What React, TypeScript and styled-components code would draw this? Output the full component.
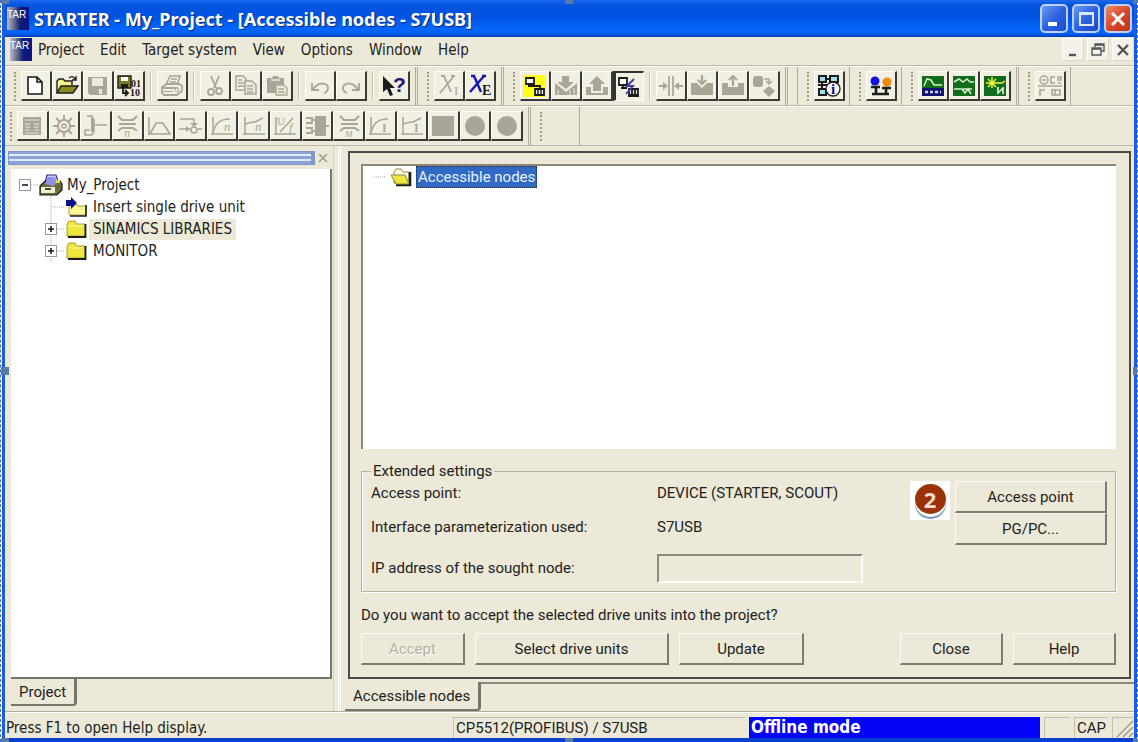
import React from "react";
import styled, { createGlobalStyle, css } from "styled-components";

const face = "#ece9d8";
const ui = '"DejaVu Sans Condensed", "DejaVu Sans", sans-serif';
const dialogFont = 'Roboto, "Liberation Sans", Arial, sans-serif';

const GlobalStyle = createGlobalStyle`
  * { box-sizing: border-box; }
  body { margin: 0; background: #fff; color: #222; font: 15px/20px ${ui}; }
  button, input { font: inherit; color: inherit; padding: 0; margin: 0; border-radius: 0; }
`;

/* ---------- window frame ---------- */

const Shell = styled.div`
  position: relative;
  min-height: 100vh;
  display: flex;
  padding-left: 1px;
  border: 1px dashed #3f6fce;
  border-width: 0 1px;
`;

const Handle = styled.i<{ $x: string; $y: string }>`
  position: absolute;
  width: 8px;
  height: 8px;
  background: #5a7ba6;
  transform: translate(-50%, -50%);
  left: ${(p) => p.$x};
  top: ${(p) => p.$y};
`;

const Handles = styled.div`
  position: absolute;
  inset: 0;
  overflow: hidden;
  pointer-events: none;
`;

const Window = styled.div`
  flex: 1;
  min-width: 0;
  display: flex;
  flex-direction: column;
  background: ${face};
  border: solid #1c5ddb;
  border-width: 0 3px 4px;
  border-bottom-color: #0a3fd0;
`;

const TitleBar = styled.header`
  height: 37px;
  flex: none;
  display: flex;
  align-items: center;
  gap: 5px;
  padding: 0 2px;
  background: linear-gradient(#1a6cf0 0, #0653de 5px, #0054e3 18px, #0566fb 28px, #0563f7 33px, #0340b8 37px);
`;

const Title = styled.h1`
  flex: 1;
  margin: 0;
  color: #fff;
  font: bold 18px/24px "Noto Sans", sans-serif;
  text-shadow: 1px 1px 1px #0a2a80;
  white-space: nowrap;
`;

const Controls = styled.div`
  display: flex;
  gap: 4px;
`;

const ControlButton = styled.button<{ $close?: boolean }>`
  width: 28px;
  height: 29px;
  display: grid;
  place-items: center;
  border: 2px solid #bcd2fa;
  border-radius: 5px;
  background: ${(p) =>
    p.$close
      ? "linear-gradient(135deg, #ef8a6c, #d9472a 50%, #b93216)"
      : "linear-gradient(135deg, #6c9bf5, #2c62e0 50%, #1c4bcd)"};
`;

const MenuBar = styled.nav`
  height: 29px;
  flex: none;
  display: flex;
  align-items: center;
  padding: 0 0 3px 5px;
  border-bottom: 1px solid #bdb9a8;
`;

const MenuItem = styled.button`
  border: 0;
  background: none;
  margin-left: 6px;
  margin-right: 10px;
  line-height: 24px;
  white-space: nowrap;
`;

const MdiControls = styled.div`
  display: flex;
  gap: 3px;
  margin-left: auto;
`;

const MdiButton = styled.button`
  width: 22px;
  height: 23px;
  display: grid;
  place-items: center;
  border: 1px solid #fff;
  border-right-color: #dcd8c8;
  border-bottom-color: #dcd8c8;
  background: #f4f2e8;
`;

/* ---------- toolbars ---------- */

const ToolRow = styled.div`
  height: 40px;
  flex: none;
  display: flex;
  overflow: hidden;
  border-top: 1px solid #fbfaf3;
  border-bottom: 1px solid #bdb9a8;
`;

const ToolGroup = styled.div<{ $double?: boolean; $apart?: boolean }>`
  display: flex;
  align-items: center;
  flex: none;
  border-right: ${(p) => (p.$double ? "3px double #b0ac9a" : "1px solid #b0ac9a")};
  padding-right: ${(p) => (p.$double ? "5px" : "4px")};
  ${(p) => p.$apart && css`
    margin-left: 9px;
    border-left: 1px solid #b0ac9a;
  `}
`;

const Grip = styled.span<{ $near?: boolean }>`
  width: 4px;
  height: 29px;
  margin: 0 5px 0 ${(p) => (p.$near ? "3px" : "7px")};
  border: 1px dotted #a09c8a;
  border-width: 0 2px 0 0;
`;

const Divider = styled.span`
  width: 2px;
  height: 28px;
  margin: 0 5px;
  background: #c4c0ae;
  border-right: 1px solid #fff;
`;

const EmptySlot = styled.span`
  width: 28px;
`;

const Tool = styled.button<{ $pressed?: boolean }>`
  width: 31px;
  height: 30px;
  display: grid;
  place-items: center;
  background: #f2efe3;
  border: solid;
  border-width: ${(p) => (p.$pressed ? "2px 1px 1px 3px" : "1px 2px 2px 1px")};
  border-color: ${(p) => (p.$pressed ? "#333 #fff #fff #333" : "#fffef8 #3a3a36 #3a3a36 #fffef8")};
`;

const DriveTools = styled.div`
  display: grid;
  grid-template-columns: repeat(16, 1fr);
  width: 506px;
  ${Tool} { width: auto; }
`;

/* ---------- work area ---------- */

const Work = styled.div`
  flex: 1;
  display: flex;
  min-height: 0;
  border-bottom: 1px solid #b0ac9a;
`;

const ProjectPane = styled.aside`
  width: 329px;
  flex: none;
  display: flex;
  flex-direction: column;
  padding: 5px 0 5px 3px;
  border-right: 1px solid #d4d0c0;
`;

const PaneCaption = styled.div`
  display: flex;
  align-items: center;
  gap: 3px;
  padding-right: 5px;
`;

const PaneGrip = styled.span`
  flex: 1;
  height: 14px;
  border: 1px solid #8496c8;
  border-right-width: 4px;
  background: linear-gradient(#8ba3d6 0 2px, #e4edfb 2px 4px, #8ba3d6 4px 7px, #dfe9fa 7px 9px, #8ba3d6 9px);
`;

const PaneClose = styled.button`
  width: 10px;
  height: 14px;
  border: 0;
  background: none;
  display: grid;
  place-items: center;
`;

const Tree = styled.ul`
  flex: 1;
  list-style: none;
  margin: 4px 1px 0 3px;
  padding: 5px 0 0 8px;
  background: #fff;
  border: solid #77746a;
  border-width: 0 2px 2px 0;
`;

const TreeRow = styled.li<{ $child?: boolean }>`
  display: flex;
  align-items: center;
  height: 22px;
  padding-left: ${(p) => (p.$child ? "26px" : "0")};
  white-space: nowrap;
`;

const TreeLabel = styled.span<{ $marked?: boolean }>`
  padding: 0 4px;
  line-height: 21px;
  background: ${(p) => (p.$marked ? "#ece9d8" : "none")};
`;

const Splitter = styled.div`
  width: 7px;
  flex: none;
  border-left: 3px double #fff;
  margin-left: 4px;
`;

const TabButton = styled.button`
  align-self: flex-start;
  border: solid #77746a;
  border-width: 0 3px 2px 0;
  border-bottom-right-radius: 4px;
  background: ${face};
  height: 29px;
  padding: 0 8px;
  font-family: ${dialogFont};
  white-space: nowrap;
`;

const ProjectTab = styled(TabButton)`
  height: 27px;
  margin-left: 3px;
`;

const Document = styled.main`
  flex: 1;
  min-width: 0;
  display: flex;
  flex-direction: column;
  padding-top: 5px;
  font-family: ${dialogFont};
`;

const DocFrame = styled.section`
  flex: 1;
  display: flex;
  flex-direction: column;
  margin-right: 3px;
  margin-left: 3px;
  padding: 11px 13px 12px 11px;
  border: 2px solid #4c4a48;
`;

const DocFooter = styled.div`
  display: flex;
  margin-top: 3px;
  > span { flex: 1; border-top: 2px solid #8b887c; }
`;

const NodeList = styled.ul`
  flex: 1;
  min-height: 120px;
  list-style: none;
  margin: 0;
  padding: 0 0 0 11px;
  background: #fff;
  border: solid #8b887c;
  border-width: 2px 0 0 2px;
`;

const NodeRow = styled.li`
  display: flex;
  align-items: center;
  gap: 4px;
  height: 22px;
`;

const SelectedLabel = styled.span`
  padding: 0 1px;
  line-height: 20px;
  color: #e8f2ff;
  background: #316ac5;
  border: 1px dotted #1b2c50;
`;

const Settings = styled.fieldset`
  min-width: 0;
  margin: 12px 0 0;
  padding: 0 8px 4px 9px;
  border: 1px solid #b5b1a0;
  box-shadow: inset 1px 0 #fff, 1px 1px #fff;
`;

const Legend = styled.legend`
  padding: 0 2px;
  line-height: 20px;
`;

const SettingsBody = styled.div`
  display: flex;
  align-items: flex-start;
`;

const Fields = styled.div`
  flex: 1;
  display: grid;
  grid-template-columns: 286px 1fr;
  grid-template-rows: 24px 44px 38px;
  align-items: center;
  white-space: nowrap;
`;

const AddressInput = styled.input`
  width: 206px;
  height: 29px;
  background: ${face};
  border: 2px solid;
  border-color: #8b887c #fbfaf3 #fbfaf3 #8b887c;
`;

const Step = styled.span`
  flex: none;
  width: 40px;
  height: 39px;
  margin-right: 5px;
  padding-top: 3px;
  display: flex;
  justify-content: center;
  background: #fff;
`;

const StepNumber = styled.b`
  width: 31px;
  height: 30px;
  border-radius: 50%;
  background: #9c3208;
  box-shadow: 0 3px 0 #fff, 0 5px 1px #7590ad;
  color: #f4dccb;
  font: bold 22px/30px "Noto Sans", sans-serif;
  text-align: center;
`;

const Actions = styled.div`
  width: 152px;
  display: flex;
  flex-direction: column;
`;

const PushButton = styled.button<{ $w?: number }>`
  width: ${(p) => (p.$w ? `${p.$w}px` : "auto")};
  height: 32px;
  flex: none;
  background: ${face};
  border: solid;
  border-width: 1px 2px 2px 1px;
  border-color: #fbfaf3 #7d7a6e #7d7a6e #fbfaf3;
  white-space: nowrap;
  &:disabled { color: #b3af9e; text-shadow: 1px 1px #fff; }
`;

const Question = styled.p`
  margin: 13px 0 8px;
  line-height: 20px;
`;

const ButtonRow = styled.div`
  display: flex;
  gap: 10px;
`;

const Spacer = styled.span`
  flex: 1;
`;

/* ---------- status bar ---------- */

const StatusBar = styled.footer`
  height: 26px;
  flex: none;
  display: flex;
  align-items: center;
  gap: 4px;
  padding-top: 4px;
  border-top: 1px solid #fff;
  line-height: 20px;
  white-space: nowrap;
`;

const StatusCell = styled.span<{ $w: number; $mode?: boolean }>`
  flex: none;
  width: ${(p) => p.$w}px;
  height: 21px;
  padding-left: 2px;
  border: solid #c4c0ae;
  border-width: 1px 0 0 1px;
  font: 15px/20px ${dialogFont};
  ${(p) => p.$mode && css`
    background: #0404f6;
    border: 0;
    color: #fff;
    font: bold 17px/21px ${ui};
  `}
`;

const StatusHint = styled.span`
  flex: 1;
  padding-left: 1px;
`;

/* ---------- drawings ---------- */

const Drawing = styled.svg`
  overflow: visible;
  flex: none;
`;

type Draw = { children?: React.ReactNode; w?: number; h?: number };
const Svg = ({ children, w = 24, h = 22 }: Draw) => (
  <Drawing width={w} height={h} viewBox={`0 0 ${w} ${h}`} fill="none" aria-hidden="true">
    {children}
  </Drawing>
);

const G = "#aaa697";
const K = "#1c1c1c";

const Letter = (p: { x: number; y: number; s: number; c: string; t: string; i?: boolean; b?: boolean }) => (
  <text x={p.x} y={p.y} fontSize={p.s} fill={p.c} fontFamily="Liberation Serif, serif"
    fontStyle={p.i ? "italic" : "normal"} fontWeight={p.b ? "bold" : "normal"}>{p.t}</text>
);

const AppLogo = () => (
  <Drawing width="22" height="23" viewBox="0 0 22 23" aria-hidden="true">
    <defs>
      <linearGradient id="logo" x1="0" x2="1">
        <stop offset="0" stopColor="#b9bdd0" />
        <stop offset=".35" stopColor="#5c6488" />
        <stop offset=".6" stopColor="#101c78" />
        <stop offset="1" stopColor="#0a1488" />
      </linearGradient>
    </defs>
    <rect width="22" height="23" fill="url(#logo)" />
    <text x="0" y="11" fontSize="10" fill="#fff" fontFamily="Liberation Sans, sans-serif">TAR</text>
  </Drawing>
);

const axes = <path d="M3 2v17M1 19h22" stroke={G} strokeWidth="1.5" />;
const funnel = <path d="M3 1l4 4h11l4-4M4 9h17M3 16l4-3h11l4 3" stroke={G} strokeWidth="2" />;

const icons: Record<string, React.ReactNode> = {
  fresh: <path d="M4 2h9l5 5v12H4zM13 2v5h5" fill="#fff" stroke={K} strokeWidth="1.6" />,
  open: (
    <>
      <path d="M2 18V6l2-2h4l2 2h7v4" fill="#f4f08a" stroke={K} strokeWidth="1.4" />
      <path d="M2 18l4-7h17l-5 7z" fill="#8d8a1d" stroke={K} strokeWidth="1.4" />
      <path d="M14 3c2-2 4-2 6 1m1-3v4h-4" stroke={K} strokeWidth="1.4" />
    </>
  ),
  save: (
    <>
      <path d="M2 2h19v18H4l-2-2z" fill={G} />
      <path d="M6 3h11v8H6zM13 14h3v5h-3z" fill={face} />
    </>
  ),
  saveCompile: (
    <>
      <path d="M1 1h13v12H1z" fill="#7d7b22" stroke={K} strokeWidth="1.4" />
      <path d="M4 2h7v4H4z" fill="#fff" />
      <path d="M4 9h7v4H4z" fill={K} />
      <path d="M6 13v5h4m-2-3l3 3-3 3" stroke={K} strokeWidth="1.8" />
      <Letter x={14} y={12} s={10} c={K} t="01" b />
      <Letter x={13} y={21} s={10} c={K} t="10" b />
    </>
  ),
  print: (
    <>
      <path d="M6 10l4-9h10l-3 9M11 4h6M10 7h6" stroke={G} strokeWidth="1.6" />
      <path d="M2 12l5-3h12l3 2v5l-5 4H4l-2-2z" stroke={G} strokeWidth="1.8" />
      <path d="M3 12h15v2H3zM3 16h10v1H3z" fill={G} />
      <circle cx="17" cy="15" r="2" fill={face} stroke={G} />
    </>
  ),
  cut: (
    <>
      <path d="M8 1l5 12M16 1l-5 12" stroke={G} strokeWidth="1.8" />
      <circle cx="8" cy="17" r="3" stroke={G} strokeWidth="1.8" />
      <circle cx="16" cy="16" r="3" stroke={G} strokeWidth="1.8" />
    </>
  ),
  copy: (
    <>
      <path d="M2 1h7l3 3v11H2zM4 5h4M4 8h6M4 11h6" stroke={G} strokeWidth="1.5" />
      <path d="M11 6h7l4 4v9H11zM13 11h6M13 14h6M13 17h6" fill={face} stroke={G} strokeWidth="1.5" />
    </>
  ),
  paste: (
    <>
      <path d="M2 3h5l1-2h5l1 2h5v15H2z" fill={G} />
      <path d="M6 5h9" stroke={face} strokeWidth="1.5" />
      <path d="M11 10h8l3 3v7H11zM13 14h6M13 17h7" fill={face} stroke={G} strokeWidth="1.3" />
    </>
  ),
  undo: <path d="M4 8v7h7M4 15L8 11c4-4 12-3 12 2 0 2-1 4-4 5" stroke={G} strokeWidth="1.8" />,
  redo: <path d="M20 8v7h-7M20 15l-4-4c-4-4-12-3-12 2 0 2 1 4 4 5" stroke={G} strokeWidth="1.8" />,
  help: (
    <>
      <path d="M1 1v16l4-3 3 7 3-1-3-7h5z" fill={K} />
      <text x="11" y="17" fontSize="21" fontWeight="bold" fill="#1d1a70" fontFamily="Liberation Sans, sans-serif">?</text>
    </>
  ),
  xi: <><path d="M3 18L17 1M7 1l7 16M4 1h4M14 1h4" stroke={G} strokeWidth="1.8" /><Letter x={17} y={20} s={13} c={G} t="I" /></>,
  xe: <><path d="M2 17L16 1M6 1l7 16M3 1h4M14 1h4" stroke="#1414b8" strokeWidth="2.4" /><Letter x={14} y={20} s={14} c={K} t="E" b /></>,
  connect: (
    <>
      <path d="M0 0h23v22H0z" fill="#ffff1a" />
      <path d="M3 3h8v6H3zM5 11h5M7 9v2" fill="#fff" stroke={K} strokeWidth="1.8" />
      <path d="M9 11h8v3" stroke={K} strokeWidth="2" />
      <path d="M12 14h9v6h-9z" fill="#eee" stroke={K} strokeWidth="1.8" />
      <path d="M15 14v6M18 14v6" stroke={K} strokeWidth="1.4" />
    </>
  ),
  download: (
    <>
      <path d="M8 1h7v6h5l-8 7-9-7h5z" fill={G} />
      <path d="M1 8l11 9 11-9v12H1z" fill={G} />
      <path d="M4 15v5M16 15v5M20 13v7" stroke={face} />
    </>
  ),
  upload: (
    <>
      <path d="M12 1l8 8h-4v7H8V9H4z" fill={G} />
      <path d="M1 12h5v6h12v-6h5v8H1z" fill={G} />
    </>
  ),
  disconnect: (
    <>
      <path d="M1 2h8v7H1zM3 12h6M5 9v3" fill="#fff" stroke={K} strokeWidth="1.8" />
      <path d="M11 13h9v6h-9zM14 13v6M17 13v6M10 20h11" fill="#ddd" stroke={K} strokeWidth="1.8" />
      <path d="M16 3l-7 7h6l-7 8" stroke="#3a3aa8" strokeWidth="1.8" />
    </>
  ),
  split: (
    <>
      <path d="M10 1v20M14 1v20M0 11h8M24 11h-8" stroke={G} strokeWidth="1.8" />
      <path d="M4 7l5 4-5 4zM20 7l-5 4 5 4z" fill={G} />
    </>
  ),
  chipIn: <><path d="M1 8h6l5 5 5-5h6v12H1z" fill={G} /><path d="M12 0v8M8 5l4 4 4-4" stroke={G} strokeWidth="2.2" /></>,
  chipOut: <><path d="M1 8h6v4h10V8h6v12H1z" fill={G} /><path d="M12 11V2M8 5l4-4 4 4" stroke={G} strokeWidth="2.2" /></>,
  convert: (
    <>
      <rect x="1" y="1" width="10" height="11" rx="3" fill={G} />
      <path d="M17 11l6 5-6 6-6-6z" fill={G} />
      <path d="M12 4h5v4m-3-2l3 3 3-3" stroke={G} strokeWidth="1.5" />
    </>
  ),
  nodesInfo: (
    <>
      <path d="M2 1h7v6H2zM13 1h8v6h-8zM2 14h7v6H2zM5 7v7M1 10h9M9 4h4" fill="#9ee0e8" stroke={K} strokeWidth="2" />
      <circle cx="16" cy="14" r="7" fill="#fff" stroke={K} strokeWidth="1.3" />
      <Letter x={14} y={19} s={15} c="#1010a0" t="i" b />
    </>
  ),
  users: (
    <>
      <circle cx="6" cy="6" r="4.500" fill="#1414e0" />
      <circle cx="18" cy="7" r="4.500" fill="#f08a10" />
      <path d="M2 12h9M13 13h9M7 12v7M17 13v6M3 19h17" stroke={K} strokeWidth="2.6" />
    </>
  ),
  trace: (
    <>
      <path d="M1 1h22v12H1z" fill="#116d1c" /><path d="M1 13h22v8H1z" fill="#12146e" />
      <path d="M3 11l3-7 4 1 3 5h8" stroke="#d9f2d0" strokeWidth="1.500" />
      <path d="M4 17h16" stroke="#cfd4ff" strokeWidth="2.600" strokeDasharray="3 2" />
    </>
  ),
  generator: (
    <>
      <path d="M1 1h22v20H1z" fill="#116d1c" />
      <path d="M2 7l5-3 4 3 4-3 3 3h4M2 14h8l3 4 3-4 3 5M11 14h9" stroke="#d9f2d0" strokeWidth="1.500" />
    </>
  ),
  tune: (
    <>
      <path d="M1 1h22v20H1z" fill="#116d1c" />
      <path d="M9 2v11M3 8h11M5 4l8 8M13 4l-8 8" stroke="#ecf23a" strokeWidth="1.500" />
      <path d="M14 8h5l3-2" stroke="#ecf23a" strokeWidth="1.500" />
      <path d="M15 19v-7M15 18l5-5M20 12v7" stroke="#d9f2d0" strokeWidth="1.700" />
    </>
  ),
  panel: (
    <>
      <circle cx="6" cy="5" r="4" stroke={G} strokeWidth="1.500" />
      <path d="M4 5h4M17 2h-4v6h4M20 2h3v3h-3zM20 8h3M0 11h24M2 21v-6h5M14 15h8v5h-8zM17 14v7" stroke={G} strokeWidth="1.600" />
    </>
  ),
  /* drive commissioning row */
  sheet: (
    <>
      <path d="M3 2h18v18H3z" fill={G} />
      <path d="M5 5h14M5 9h5M14 9h5M5 12h5M14 12h5M5 15h5M14 15h5M5 18h14" stroke={face} strokeWidth="1" />
    </>
  ),
  gear: (
    <>
      <circle cx="12" cy="11" r="6" stroke={G} strokeWidth="2" />
      <circle cx="12" cy="11" r="2" stroke={G} strokeWidth="1.500" />
      <path d="M12 0v5M12 17v5M1 11h5M18 11h5M4 3l4 4M16 15l4 4M20 3l-4 4M8 15l-4 4" stroke={G} strokeWidth="2" />
    </>
  ),
  inputs: (
    <>
      <path d="M3 1h5v13M10 4v12l-2 4H1v-5h5M11 10h12" stroke={G} strokeWidth="1.600" />
      <path d="M7 3h3v14H7z" fill={G} />
    </>
  ),
  limitN: <>{funnel}<Letter x={9} y={22} s={12} c={G} t="n" i /></>,
  ramp: <path d="M2 2v18M1 19h23M3 19l6-11h7l7 11" stroke={G} strokeWidth="1.600" />,
  mixer: (
    <>
      <path d="M2 4h14v6M1 14h11M20 14h4" stroke={G} strokeWidth="1.600" />
      <path d="M12 8h8l-4 4zM8 11l4 3-4 3z" fill={G} />
      <circle cx="16" cy="15" r="3" stroke={G} strokeWidth="1.600" />
    </>
  ),
  curveN: <>{axes}<path d="M3 18C5 9 9 4 20 4" stroke={G} strokeWidth="1.400" /><Letter x={14} y={16} s={13} c={G} t="n" i /></>,
  lineN: <>{axes}<path d="M3 9l8-2 2 0 8-4" stroke={G} strokeWidth="1.400" /><Letter x={13} y={16} s={13} c={G} t="n" i /></>,
  uf: <>{axes}<path d="M7 17L20 3" stroke={G} strokeWidth="1.600" /><Letter x={4} y={10} s={11} c={G} t="U" /><Letter x={16} y={17} s={12} c={G} t="f" i /></>,
  block: <><path d="M10 1h11v20H10z" fill={G} /><path d="M1 3h6v5H1M1 13h6v5H1M8 5h2M8 16h2M21 11h3" stroke={G} strokeWidth="1.800" /></>,
  limitM: <>{funnel}<Letter x={8} y={22} s={9} c={G} t="M" i /></>,
  curveI: <>{axes}<path d="M3 18C5 9 9 4 20 4" stroke={G} strokeWidth="1.400" /><Letter x={14} y={17} s={12} c={G} t="I" b /></>,
  lineI: <>{axes}<path d="M3 9l8-2 2 0 8-4" stroke={G} strokeWidth="1.400" /><Letter x={14} y={17} s={12} c={G} t="I" b /></>,
  square: <path d="M1 1h22v20H1z" fill={G} />,
  disc: <circle cx="12" cy="11" r="10" fill={G} />,
};

const ToolIcon = ({ name, label, pressed }: { name: string; label: string; pressed?: boolean }) => (
  <Tool type="button" aria-label={label} aria-pressed={pressed} $pressed={pressed}>
    <Svg>{icons[name]}</Svg>
  </Tool>
);

const Expander = ({ open }: { open?: boolean }) => (
  <Svg w={20} h={22}>
    <path d="M12 11h8" stroke="#a8a8a8" strokeDasharray="1 1" />
    {!open && <path d="M6 0v22" stroke="#a8a8a8" strokeDasharray="1 1" />}
    <rect x=".5" y="5.5" width="11" height="11" fill="#fff" stroke="#8e9aa8" />
    <path d={open ? "M3 11h6" : "M3 11h6M6 8v6"} stroke={K} strokeWidth="1.6" />
  </Svg>
);

const Folder = () => (
  <Svg w={24} h={20}>
    <path d="M2 17V5l2-3h6l2 3h8v12z" fill="#ece63e" stroke="#a8a13a" />
    <path d="M20.5 5v13H3" stroke={K} strokeWidth="1.8" />
    <path d="M4 7h14" stroke="#fdfbb0" />
  </Svg>
);

const OpenFolder = () => (
  <Svg w={22} h={20}>
    <path d="M4 16V5l2-3h5l2 3h6v12z" fill="#fffde0" stroke="#8a8742" />
    <path d="M20 5v13H6" stroke={K} strokeWidth="2.6" />
    <path d="M1 8h14l4 9H6z" fill="#ece63e" stroke="#8a8742" />
  </Svg>
);

const ProjectIcon = () => (
  <Svg w={24} h={22}>
    <path d="M6 9L8 1h9l2 6-5 5z" fill="#cfd2f4" stroke="#2a2a90" strokeWidth="1.2" />
    <path d="M9 3l6 1-1 5-4-1z" fill="#4a50c4" />
    <path d="M1 12l5-5h15l2 3v6l-5 5H1z" fill="#6b6a3c" stroke={K} strokeWidth="1.2" />
    <path d="M6 10l3-7h7l2 6-4 3z" fill="#8d92e4" />
    <path d="M2 13h14v6H2z" fill="#f2f1d4" />
    <path d="M6 15h6" stroke={K} strokeWidth="1.6" />
    <path d="M17 6h4v3h-4z" fill="#e6df28" />
  </Svg>
);

const InsertIcon = () => (
  <Svg w={24} h={22}>
    <path d="M4 19V10l2-2h5l2 2h8v9z" fill="#fbf59a" stroke="#a8a13a" />
    <path d="M21 9v11H5" stroke={K} strokeWidth="1.6" />
    <path d="M1 4h5V1l6 6-6 6v-3H1z" fill="#10108c" />
  </Svg>
);

const firstTools = [
  [["fresh", "New"], ["open", "Open"], ["save", "Save"], ["saveCompile", "Save and compile"]],
  [["print", "Print"]],
  [["cut", "Cut"], ["copy", "Copy"], ["paste", "Paste"]],
  [["undo", "Undo"], ["redo", "Redo"]],
  [["help", "Context help"]],
];

const driveTools = [
  "sheet", "gear", "inputs", "limitN", "ramp", "mixer", "curveN", "lineN",
  "uf", "block", "limitM", "curveI", "lineI", "square", "disc", "disc",
];

const menus = ["Project", "Edit", "Target system", "View", "Options", "Window", "Help"];

export default function App() {
  return (
    <>
      <GlobalStyle />
      <Shell>
        <Window>
          <TitleBar>
            <AppLogo />
            <Title>STARTER - My_Project - [Accessible nodes - S7USB]</Title>
            <Controls>
              <ControlButton type="button" aria-label="Minimize">
                <Svg w={20} h={20}><path d="M4 15h9" stroke="#fff" strokeWidth="4" /></Svg>
              </ControlButton>
              <ControlButton type="button" aria-label="Maximize">
                <Svg w={20} h={20}><path d="M4 4h13v12H4zM4 5h13" stroke="#dcebff" strokeWidth="2" /></Svg>
              </ControlButton>
              <ControlButton type="button" aria-label="Close window" $close>
                <Svg w={20} h={20}><path d="M4 4l12 12M16 4L4 16" stroke="#fff" strokeWidth="3" /></Svg>
              </ControlButton>
            </Controls>
          </TitleBar>

          <MenuBar aria-label="Main menu">
            <AppLogo />
            {menus.map((m) => <MenuItem type="button" key={m}>{m}</MenuItem>)}
            <MdiControls>
              <MdiButton type="button" aria-label="Minimize document">
                <Svg w={16} h={16}><path d="M4 13h7" stroke="#555" strokeWidth="2.4" /></Svg>
              </MdiButton>
              <MdiButton type="button" aria-label="Restore document">
                <Svg w={16} h={16}><path d="M5 5V2h9v7h-3M5 3h9M2 6h9v7H2zM2 7h9" stroke="#555" strokeWidth="1.4" /></Svg>
              </MdiButton>
              <MdiButton type="button" aria-label="Close document">
                <Svg w={16} h={16}><path d="M3 3l10 10M13 3L3 13" stroke="#555" strokeWidth="2.4" /></Svg>
              </MdiButton>
            </MdiControls>
          </MenuBar>

          <ToolRow>
            <ToolGroup $double>
              <Grip />
              {firstTools.map((set, i) => (
                <React.Fragment key={i}>
                  {i > 0 && <Divider />}
                  {set.map(([n, l]) => <ToolIcon key={n} name={n} label={l} />)}
                </React.Fragment>
              ))}
            </ToolGroup>
            <ToolGroup $double>
              <Grip />
              <ToolIcon name="xi" label="Import variables" />
              <ToolIcon name="xe" label="Export variables" />
            </ToolGroup>
            <ToolGroup $double>
              <Grip />
              <ToolIcon name="connect" label="Connect to target system" />
              <ToolIcon name="download" label="Download" />
              <ToolIcon name="upload" label="Upload" />
              <ToolIcon name="disconnect" label="Disconnect" pressed />
              <Divider />
              <ToolIcon name="split" label="Compare" />
              <ToolIcon name="chipIn" label="Load to device" />
              <ToolIcon name="chipOut" label="Load to PG" />
              <ToolIcon name="convert" label="Copy RAM to ROM" />
            </ToolGroup>
            <ToolGroup $apart>
              <Grip />
              <ToolIcon name="nodesInfo" label="Accessible nodes" />
            </ToolGroup>
            <ToolGroup>
              <Grip />
              <ToolIcon name="users" label="Assign" />
            </ToolGroup>
            <ToolGroup $double>
              <Grip />
              <ToolIcon name="trace" label="Trace" />
              <ToolIcon name="generator" label="Function generator" />
              <ToolIcon name="tune" label="Automatic controller setting" />
            </ToolGroup>
            <ToolGroup>
              <Grip />
              <ToolIcon name="panel" label="Control panel" />
            </ToolGroup>
          </ToolRow>

          <ToolRow>
            <ToolGroup $double>
              <Grip $near />
              <DriveTools>
                {driveTools.map((n, i) => <ToolIcon key={i} name={n} label={`Drive tool ${i + 1}`} />)}
              </DriveTools>
            </ToolGroup>
            <ToolGroup>
              <Grip />
              <EmptySlot />
            </ToolGroup>
          </ToolRow>

          <Work>
            <ProjectPane>
              <PaneCaption>
                <PaneGrip />
                <PaneClose type="button" aria-label="Close project navigator">
                  <Svg w={10} h={10}><path d="M1 1l8 8M9 1L1 9" stroke="#a09c8a" strokeWidth="1.5" /></Svg>
                </PaneClose>
              </PaneCaption>
              <Tree>
                <TreeRow><Expander open /><ProjectIcon /><TreeLabel>My_Project</TreeLabel></TreeRow>
                <TreeRow $child>
                  <Svg w={20} h={22}><path d="M6 0v22M6 11h14" stroke="#a8a8a8" strokeDasharray="1 1" /></Svg>
                  <InsertIcon /><TreeLabel>Insert single drive unit</TreeLabel>
                </TreeRow>
                <TreeRow $child><Expander /><Folder /><TreeLabel $marked>SINAMICS LIBRARIES</TreeLabel></TreeRow>
                <TreeRow $child><Expander /><Folder /><TreeLabel>MONITOR</TreeLabel></TreeRow>
              </Tree>
              <ProjectTab type="button">Project</ProjectTab>
            </ProjectPane>
            <Splitter />
            <Document>
              <DocFrame>
                <NodeList>
                  <NodeRow>
                    <Svg w={12} h={22}><path d="M0 11h12" stroke="#a8a8a8" strokeDasharray="1 1" /></Svg>
                    <OpenFolder />
                    <SelectedLabel>Accessible nodes</SelectedLabel>
                  </NodeRow>
                </NodeList>
                <Settings>
                  <Legend>Extended settings</Legend>
                  <SettingsBody>
                    <Fields>
                      <span>Access point:</span><span>DEVICE (STARTER, SCOUT)</span>
                      <span>Interface parameterization used:</span><span>S7USB</span>
                      <label htmlFor="ip">IP address of the sought node:</label><AddressInput id="ip" />
                    </Fields>
                    <Step><StepNumber>2</StepNumber></Step>
                    <Actions>
                      <PushButton type="button">Access point</PushButton>
                      <PushButton type="button">PG/PC...</PushButton>
                    </Actions>
                  </SettingsBody>
                </Settings>
                <Question>Do you want to accept the selected drive units into the project?</Question>
                <ButtonRow>
                  <PushButton type="button" disabled $w={104}>Accept</PushButton>
                  <PushButton type="button" $w={194}>Select drive units</PushButton>
                  <PushButton type="button" $w={125}>Update</PushButton>
                  <Spacer />
                  <PushButton type="button" $w={103}>Close</PushButton>
                  <PushButton type="button" $w={103}>Help</PushButton>
                </ButtonRow>
              </DocFrame>
              <DocFooter>
                <TabButton type="button">Accessible nodes</TabButton>
                <span />
              </DocFooter>
            </Document>
          </Work>

          <StatusBar>
            <StatusHint>Press F1 to open Help display.</StatusHint>
            <StatusCell $w={292}>CP5512(PROFIBUS) / S7USB</StatusCell>
            <StatusCell $w={291} $mode>Offline mode</StatusCell>
            <StatusCell $w={26} />
            <StatusCell $w={34}>CAP</StatusCell>
            <StatusCell $w={22}>
              <Svg w={18} h={19}><path d="M2 19L18 3M8 19L18 9M14 19l4-4" stroke="#a09c8a" strokeWidth="1.6" /></Svg>
            </StatusCell>
          </StatusBar>
        </Window>
        <Handles>
          {["0%", "50%", "100%"].map((y) =>
            ["4px", "50%", "100%"].map((x) =>
              x === "50%" && y === "50%" ? null : <Handle key={x + y} $x={x} $y={y} />
            )
          )}
        </Handles>
      </Shell>
    </>
  );
}
